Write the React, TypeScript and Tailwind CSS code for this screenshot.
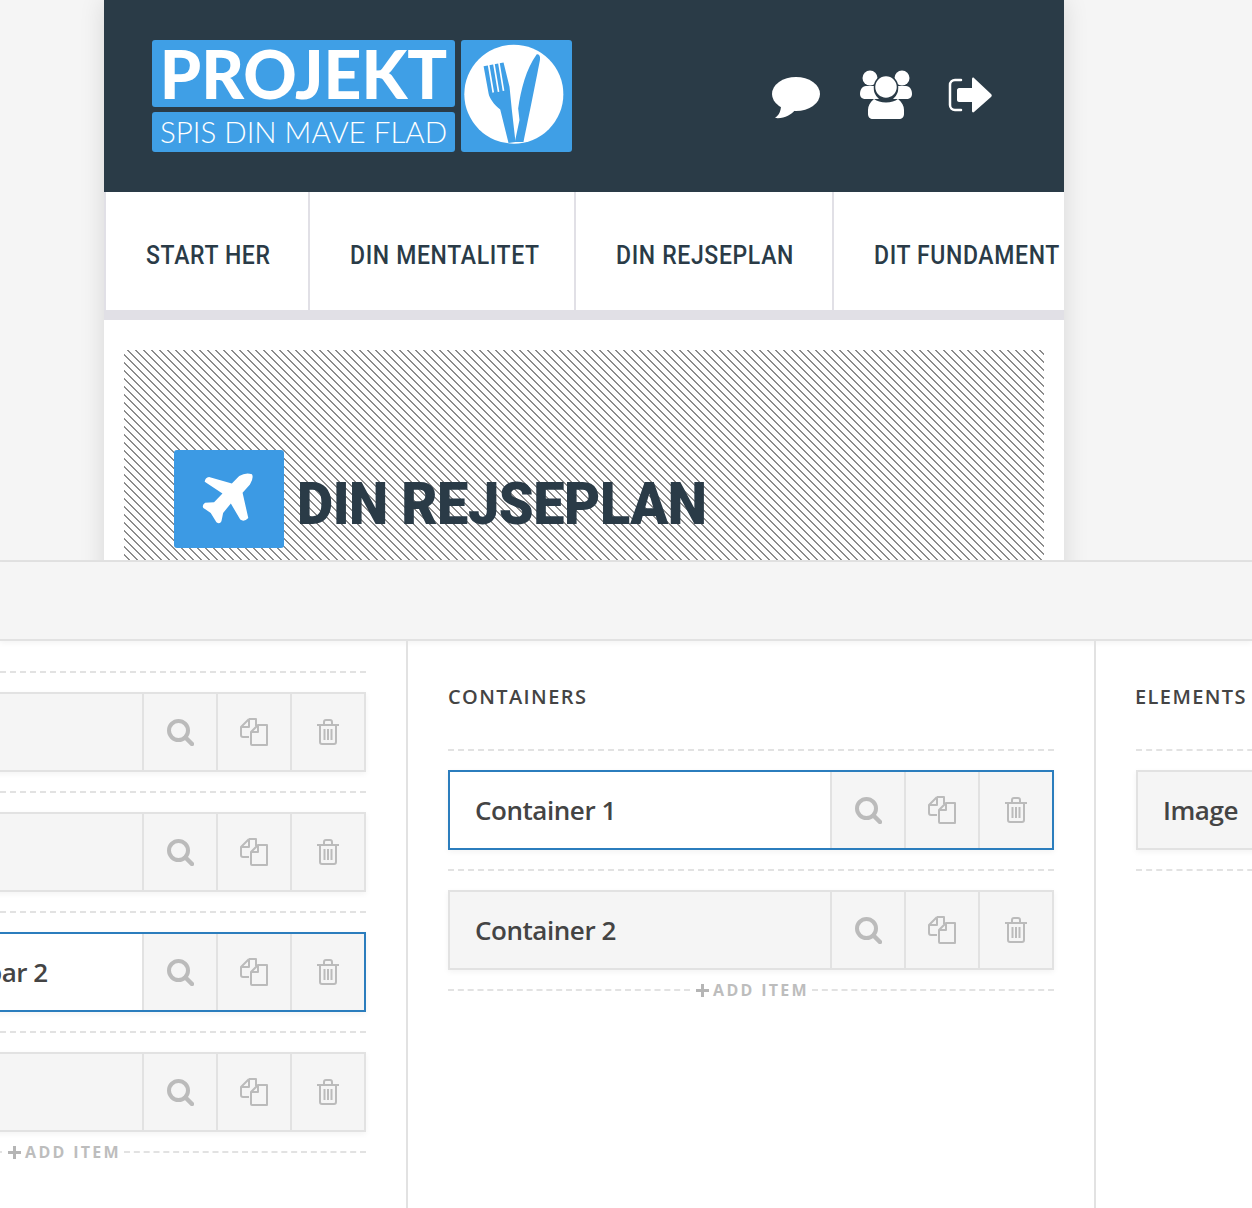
const SearchIcon = () => (
  <svg width="28" height="28" viewBox="0 0 28 28" fill="none" stroke="#bbbbbb">
    <circle cx="12.5" cy="12.5" r="9.5" strokeWidth="4" />
    <path d="M19.5 19.5L26 26" strokeWidth="4.5" strokeLinecap="round" />
  </svg>
);

const CopyIcon = () => (
  <svg width="30" height="30" viewBox="0 0 30 30" fill="none" stroke="#bbbbbb" strokeWidth="2" strokeLinejoin="round">
    <path d="M10 2h7v7M10 2L2 10v8a2 2 0 002 2h6" />
    <path d="M2 10h8V2M17 9V2" />
    <path d="M19 8h9v20H13a1 1 0 01-1-1V15zM19 8v7h-7" />
  </svg>
);

const TrashIcon = () => (
  <svg width="24" height="26" viewBox="0 0 24 26" fill="none" stroke="#bbbbbb" strokeWidth="2">
    <path d="M1 6h22M8 6V3a2 2 0 012-2h4a2 2 0 012 2v3" />
    <path d="M4 6v17a2 2 0 002 2h12a2 2 0 002-2V6" />
    <path d="M8.5 10v11M12 10v11M15.5 10v11" />
  </svg>
);

const Dash = () => <div className="h-0 border-t-2 border-dashed border-[#e2e2e2]" />;

const AddItem = () => (
  <div className="flex h-[2px] items-center gap-[3px]">
    <div className="h-0 flex-1 border-t-2 border-dashed border-[#e2e2e2]" />
    <span className="ml-[3px] flex items-center gap-1 text-[16px] font-bold tracking-[2.3px] text-[#bdbdbd]">
      <svg width="13" height="13" viewBox="0 0 13 13" fill="#b5b5b5">
        <path d="M5 0h3v5h5v3H8v5H5V8H0V5h5z" />
      </svg>
      ADD ITEM
    </span>
    <div className="h-0 flex-1 border-t-2 border-dashed border-[#e2e2e2]" />
  </div>
);

const Row = ({ label, active, buttons = true }: { label?: string; active?: boolean; buttons?: boolean }) => (
  <div
    className={`flex h-20 border-2 shadow-[0_2px_6px_rgba(0,0,0,0.05)] ${
      active ? "border-[#2b7dbd] bg-white" : "border-[#e2e2e2] bg-[#f5f5f5]"
    }`}
  >
    <div className="flex min-w-0 flex-1 items-center whitespace-nowrap pl-[25px] text-[26px] font-semibold tracking-[-0.45px] text-[#444444]">
      {label}
    </div>
    {buttons && (
      <>
        <div className="flex w-[74px] items-center justify-center border-l-2 border-[#e2e2e2] bg-[#f5f5f5]">
          <SearchIcon />
        </div>
        <div className="flex w-[74px] items-center justify-center border-l-2 border-[#e2e2e2] bg-[#f5f5f5]">
          <CopyIcon />
        </div>
        <div className="flex w-[74px] items-center justify-center border-l-2 border-[#e2e2e2] bg-[#f5f5f5]">
          <TrashIcon />
        </div>
      </>
    )}
  </div>
);

const navItems = [
  { label: "START HER", w: "w-[204px] shrink-0" },
  { label: "DIN MENTALITET", w: "w-[266px] shrink-0" },
  { label: "DIN REJSEPLAN", w: "w-[258px] shrink-0" },
  { label: "DIT FUNDAMENT", w: "min-w-0 flex-1" },
];

const Logo = () => (
  <div className="flex gap-[6px]">
    <div className="flex w-[303px] flex-col gap-[5px]">
      <div className="flex h-[67px] items-center justify-center rounded-[3px] bg-[#3f9fe6] font-['Lato',sans-serif] text-[66px] font-black text-white">
        PROJEKT
      </div>
      <div className="flex h-10 items-center justify-center rounded-[3px] bg-[#3f9fe6] font-['Lato',sans-serif] text-[29.5px] font-light text-white">
        SPIS DIN MAVE FLAD
      </div>
    </div>
    <div className="h-[112px] w-[111px] rounded-[3px] bg-[#3f9fe6]">
      <svg width="111" height="112" viewBox="962 30 334 335">
        <circle cx="1121" cy="192" r="149" fill="#ffffff" />
        <path
          d="M1030 108L1090 97L1108 170L1115 240L1126 336L1105 339L1080 238C1060 222 1048 205 1045 190Z"
          fill="#3f9fe6"
        />
        <path
          d="M1045 104L1059 187M1061 101L1075 185M1076 98L1090 182"
          stroke="#ffffff"
          strokeWidth="5"
          fill="none"
        />
        <path
          d="M1190 72C1198 70 1202 80 1199 92C1188 150 1168 250 1150 336L1124 336L1138 270L1134 235C1142 180 1158 115 1190 72Z"
          fill="#3f9fe6"
        />
      </svg>
    </div>
  </div>
);

const HeaderIcons = () => (
  <div className="flex items-center gap-[35px]">
    <svg width="50" height="42" viewBox="0 0 50 42" fill="#ffffff" className="mr-[3px] mt-1">
      <ellipse cx="25" cy="17" rx="24" ry="17" />
      <path d="M10 28C10 34 8 38 4 41C13 42 20 38 24 33Z" />
    </svg>
    <svg width="54" height="50" viewBox="0 0 54 50" fill="#ffffff" className="-mt-[2px]">
      <circle cx="11" cy="8" r="7.5" />
      <circle cx="43" cy="8" r="7.5" />
      <path d="M7 16h8a14 14 0 005 13H7c-4 0-6-2-6-5 0-4 2-8 6-8zM39 16h8c4 0 6 4 6 8 0 3-2 5-6 5H34a14 14 0 005-13z" />
      <circle cx="27" cy="17" r="11.5" stroke="#2a3b47" strokeWidth="1.5" />
      <path d="M15 29c3 2 7 3.5 12 3.5s9-1.500 12-3.500c4 3 6 7 6 11v4c0 3-2 5-5 5H14c-3 0-5-2-5-5v-4c0-4 2-8 6-11z" />
    </svg>
    <svg width="44" height="36" viewBox="0 0 44 36" fill="#ffffff" className="-mt-[2px]">
      <path d="M13 3H7a5 5 0 00-5 5v20a5 5 0 005 5h6" fill="none" stroke="#ffffff" strokeWidth="2.5" strokeLinecap="round" />
      <path d="M11 11h13V2c0-1 1-2 2-1l17 16c1 1 1 2 0 3L26 35c-1 1-2 0-2-1v-9H11c-1 0-2-1-2-2V13c0-1 1-2 2-2z" />
    </svg>
  </div>
);

export default function App() {
  return (
    <div className="h-[1208px] w-full overflow-hidden bg-white font-['Open_Sans',sans-serif]">
      <div className="h-[560px] overflow-hidden bg-[#f5f5f5] pl-[104px]">
        <div className="h-[600px] w-[960px] bg-white shadow-[0_0_24px_rgba(0,0,0,0.12)]">
          <header className="flex h-[192px] items-center justify-between bg-[#2a3b47] pl-12 pr-[72px]">
            <Logo />
            <HeaderIcons />
          </header>
          <nav className="flex h-[118px] border-l-2 border-[#e1e0e6] bg-white font-['Roboto',sans-serif] text-[25px] font-medium tracking-[0.7px] text-[#2a3b47]">
            {navItems.map((item) => (
              <div
                key={item.label}
                className={`flex ${item.w} items-center whitespace-nowrap border-r-2 border-[#e1e0e6] pl-10 pt-[10px] last:border-r-0`}
              >
                <span className="origin-left scale-x-[0.92]">{item.label}</span>
              </div>
            ))}
          </nav>
          <div className="h-[10px] bg-[#e1e0e6]" />
          <div className="px-5 pt-[30px]">
            <div className="flex h-[300px] items-start bg-[repeating-linear-gradient(45deg,#ffffff,#ffffff_4.557px,#8c8c8c_4.557px,#8c8c8c_5.657px)] pl-[50px] pt-[100px]">
              <div className="flex h-[98px] w-[110px] items-center justify-center rounded-[3px] bg-[#3c9ae4]">
                <svg width="57" height="57" viewBox="306 515 170 170" fill="#ffffff">
                  <path d="M458 525Q440 518 420 530L398 552L330 533Q318 535 317 547L370 582L345 608L318 610Q308 618 313 625L335 640L352 668Q362 675 367 665L372 640L395 612L423 660Q435 668 447 655L430 580L452 555Q464 535 458 525Z" />
                </svg>
              </div>
              <div className="ml-[13px] flex h-[98px] items-center pt-[10px] font-['Roboto',sans-serif] text-[60px] font-black tracking-[-0.5px] text-[#2a3b47]">
                <span className="origin-left scale-x-[0.93]">DIN REJSEPLAN</span>
              </div>
            </div>
          </div>
        </div>
      </div>
      <div className="relative border-t-2 border-[#e2e2e2]">
        <div className="h-[79px] border-b-2 border-[#e2e2e2] bg-[#f5f5f5] shadow-[0_2px_6px_rgba(0,0,0,0.05)]" />
        <div className="flex h-[567px]">
          <div className="flex w-[408px] shrink-0 justify-end overflow-hidden border-r-2 border-[#e2e2e2] pr-10 pt-[30px]">
            <div className="flex w-[606px] shrink-0 flex-col gap-[19px]">
              <Dash />
              <Row />
              <Dash />
              <Row />
              <Dash />
              <Row label="Page navigation bar 2" active />
              <Dash />
              <Row />
              <AddItem />
            </div>
          </div>
          <div className="w-[688px] shrink-0 border-r-2 border-[#e2e2e2] px-10 pt-[42px]">
            <h3 className="mb-[38px] h-[28px] text-[20px] font-semibold leading-[28px] tracking-[1.4px] text-[#444444]">CONTAINERS</h3>
            <div className="flex flex-col gap-[19px]">
              <Dash />
              <Row label="Container 1" active />
              <Dash />
              <Row label="Container 2" />
              <AddItem />
            </div>
          </div>
          <div className="w-[400px] shrink-0 pl-10 pt-[42px]">
            <h3 className="-ml-px mb-[38px] h-[28px] text-[20px] font-semibold leading-[28px] tracking-[1.4px] text-[#444444]">ELEMENTS</h3>
            <div className="flex flex-col gap-[19px]">
              <Dash />
              <Row label="Image" buttons={false} />
              <Dash />
            </div>
          </div>
        </div>
      </div>
    </div>
  );
}
